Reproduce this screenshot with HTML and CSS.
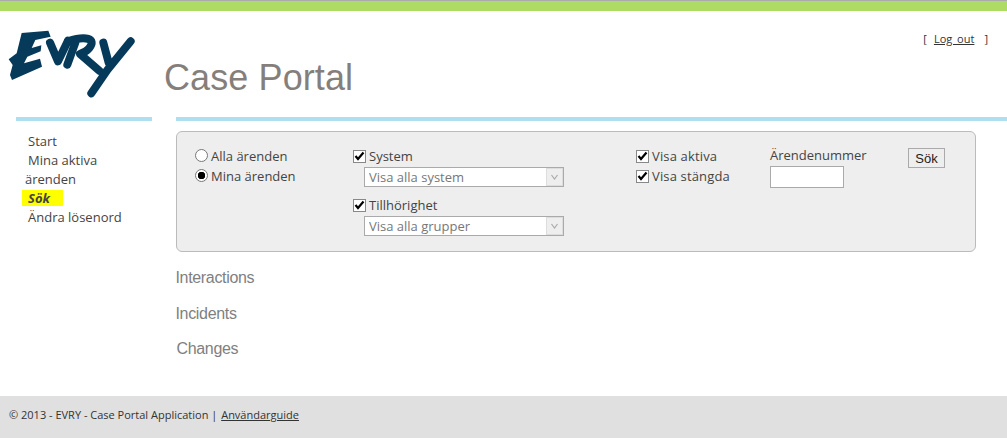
FILE: index.html
```html
<!DOCTYPE html>
<html lang="en">
<head>
    <meta charset="UTF-8">
    <meta name="viewport" content="width=device-width, initial-scale=1.0">
    <title>Case Portal</title>
    <link rel="stylesheet" href="styles.css">
</head>
<body>
    <div class="top-bar"></div>

    <!-- Header with logo and title -->
    <div class="header">
        <svg class="logo" viewBox="0 0 435 255" aria-label="EVRY">
            <path class="logo-fill" d="M65 39 L145 32 L152 50 L106 60 L95 84 L124 76 L122 94 L82 110 L72 130 L120 116 L126 140 L36 180 L30 165 L38 135 L26 118 L50 100 Z"/>
            <path class="logo-stroke" d="M150 68 L174 124 L204 62"/>
            <path class="logo-stroke" d="M226 68 L202 134 M204 64 C258 46 290 56 268 84 C260 94 250 98 240 102 L298 152"/>
            <path class="logo-stroke" d="M392 64 L322 150 L274 220 M310 68 L326 128"/>
        </svg>
        <h1 class="title">Case Portal</h1>
        <div class="logout">[<a href="#">Log out</a>]</div>
    </div>

    <div class="main">
        <!-- Left menu -->
        <div class="sidebar">
            <ul class="menu">
                <li><a href="#">Start</a></li>
                <li><a href="#">Mina aktiva ärenden</a></li>
                <li><a href="#" class="current">Sök</a></li>
                <li><a href="#">Ändra lösenord</a></li>
            </ul>
        </div>

        <div class="content">
            <!-- Search form -->
            <form class="search-box">
                <div class="col-owner">
                    <label class="row"><input type="radio" name="owner"> Alla ärenden</label>
                    <label class="row"><input type="radio" name="owner" checked> Mina ärenden</label>
                </div>
                <div class="col-filter">
                    <label class="row"><input type="checkbox" checked> System</label>
                    <select class="picker"><option>Visa alla system</option></select>
                    <label class="row row-second"><input type="checkbox" checked> Tillhörighet</label>
                    <select class="picker"><option>Visa alla grupper</option></select>
                </div>
                <div class="col-state">
                    <label class="row"><input type="checkbox" checked> Visa aktiva</label>
                    <label class="row"><input type="checkbox" checked> Visa stängda</label>
                </div>
                <div class="col-number">
                    <label for="case-number">Ärendenummer</label>
                    <input type="text" id="case-number">
                </div>
                <button type="button" class="search-btn">Sök</button>
            </form>

            <h3 class="section">Interactions</h3>
            <h3 class="section">Incidents</h3>
            <h3 class="section section-changes">Changes</h3>
        </div>
    </div>

    <div class="footer">© 2013 - EVRY - Case Portal Application | <a href="#">Användarguide</a></div>
</body>
</html>
```

FILE: styles.css
```css
html, body {
    margin: 0;
    padding: 0;
}
body {
    font-family: "Open Sans", sans-serif;
    font-size: 13px;
    color: #444;
    background-color: #fff;
    min-height: 100vh;
    display: flex;
    flex-direction: column;
}
a {
    color: inherit;
}
.top-bar {
    height: 10px;
    background-color: #aedb63;
    border-top: 1px solid #aaa;
}
.header {
    display: flex;
    height: 95px;
}
.logo {
    width: 145px;
    height: 85px;
    margin-top: 9px;
    flex-shrink: 0;
}
.logo-fill {
    fill: #063a5a;
}
.logo-stroke {
    fill: none;
    stroke: #063a5a;
    stroke-width: 24;
    stroke-linecap: round;
    stroke-linejoin: round;
}
.title {
    font-family: "Liberation Sans", Arial, sans-serif;
    font-size: 36px;
    font-weight: normal;
    letter-spacing: 0.1px;
    color: #857f7c;
    margin: 46px 0 0 19px;
    line-height: 41px;
}
.logout {
    margin: 20px 19px 0 auto;
    font-size: 11px;
    line-height: 16px;
    color: #333;
}
.logout a {
    margin: 0 10px 0 7px;
    word-spacing: 2px;
}
.main {
    display: flex;
    padding-left: 16px;
    margin-top: 11px;
}
.sidebar {
    width: 136px;
    border-top: 4px solid #addfee;
    margin-right: 24px;
}
.menu {
    list-style: none;
    margin: 11px 0 0;
    padding: 0 20px 0 9px;
    line-height: 19px;
}
.menu li {
    text-indent: 3px;
}
.menu a {
    text-decoration: none;
}
.menu .current {
    display: inline-block;
    background-color: #ff0;
    font-weight: bold;
    font-style: italic;
    line-height: 16px;
    text-indent: 0;
    margin-left: -6px;
    padding: 0 13px 0 6px;
}
.content {
    flex: 1;
    border-top: 4px solid #addfee;
}
.search-box {
    display: flex;
    width: 800px;
    height: 121px;
    box-sizing: border-box;
    margin-top: 10px;
    padding: 14px 0 0 18px;
    background-color: #eee;
    border: 1px solid #bbb;
    border-radius: 6px;
}
.row {
    display: flex;
    align-items: center;
    gap: 3px;
    height: 20px;
}
.row input {
    flex-shrink: 0;
}
input[type="checkbox"] {
    appearance: none;
    width: 13px;
    height: 13px;
    margin: 0;
    border: 1px solid #888;
    background: #fff url("data:image/svg+xml,%3Csvg xmlns='http://www.w3.org/2000/svg' viewBox='0 0 13 13'%3E%3Cpath d='M2.5 6 L5 9 L10.5 2.5' fill='none' stroke='%23000' stroke-width='2.2'/%3E%3C/svg%3E") center/13px no-repeat;
    box-sizing: border-box;
}
input[type="radio"] {
    appearance: none;
    width: 13px;
    height: 13px;
    margin: -2px 0 0;
    border: 1px solid #777;
    border-radius: 50%;
    background-color: #fff;
    box-sizing: border-box;
}
input[type="radio"]:checked {
    background: radial-gradient(circle, #000 0, #000 3.5px, #fff 4px);
}
.col-owner {
    width: 158px;
}
.col-filter {
    width: 283px;
}
.col-state {
    width: 134px;
    letter-spacing: 0.15px;
}
.col-number {
    width: 138px;
    margin-top: 1px;
}
.col-number label {
    display: block;
    height: 19px;
    line-height: 16px;
}
.col-number input {
    display: block;
    width: 74px;
    height: 22px;
    box-sizing: border-box;
    margin: 0;
    border: 1px solid #aaa;
    background-color: #fff;
}
.picker {
    appearance: none;
    display: block;
    width: 200px;
    height: 20px;
    box-sizing: border-box;
    margin: 1px 0 0 11px;
    padding: 0 0 0 4px;
    font-family: inherit;
    font-size: 13px;
    color: #777;
    border: 1px solid #aaa;
    border-radius: 0;
    background: #fff url("data:image/svg+xml,%3Csvg xmlns='http://www.w3.org/2000/svg' viewBox='0 0 17 18'%3E%3Crect x='.5' y='.5' width='16' height='17' fill='%23eee' stroke='%23ddd'/%3E%3Cpath d='M5.5 7 L8.5 11 L11.5 7' fill='none' stroke='%23aaa' stroke-width='1.2'/%3E%3C/svg%3E") right center/17px 18px no-repeat;
}
.row-second {
    margin-top: 8px;
}
.search-btn {
    width: 37px;
    height: 20px;
    padding: 0;
    margin-top: 2px;
    font-family: "Liberation Sans", Arial, sans-serif;
    font-size: 13px;
    color: #222;
    background-color: #eee;
    border: 1px solid #aaa;
}
.section {
    font-family: "Liberation Sans", Arial, sans-serif;
    font-size: 16px;
    font-weight: normal;
    letter-spacing: -0.33px;
    color: #808080;
    margin: 0;
    height: 36px;
    line-height: 18px;
    text-indent: -0.5px;
}
.search-box + .section {
    margin-top: 17px;
}
.section-changes {
    padding-left: 1px;
    margin-top: -1px;
}
.footer {
    margin-top: auto;
    height: 42px;
    box-sizing: border-box;
    padding: 11px 0 0 9px;
    font-size: 11px;
    line-height: 16px;
    color: #333;
    background-color: #e0e0e0;
}
.footer a {
    margin-left: 1px;
}
```
